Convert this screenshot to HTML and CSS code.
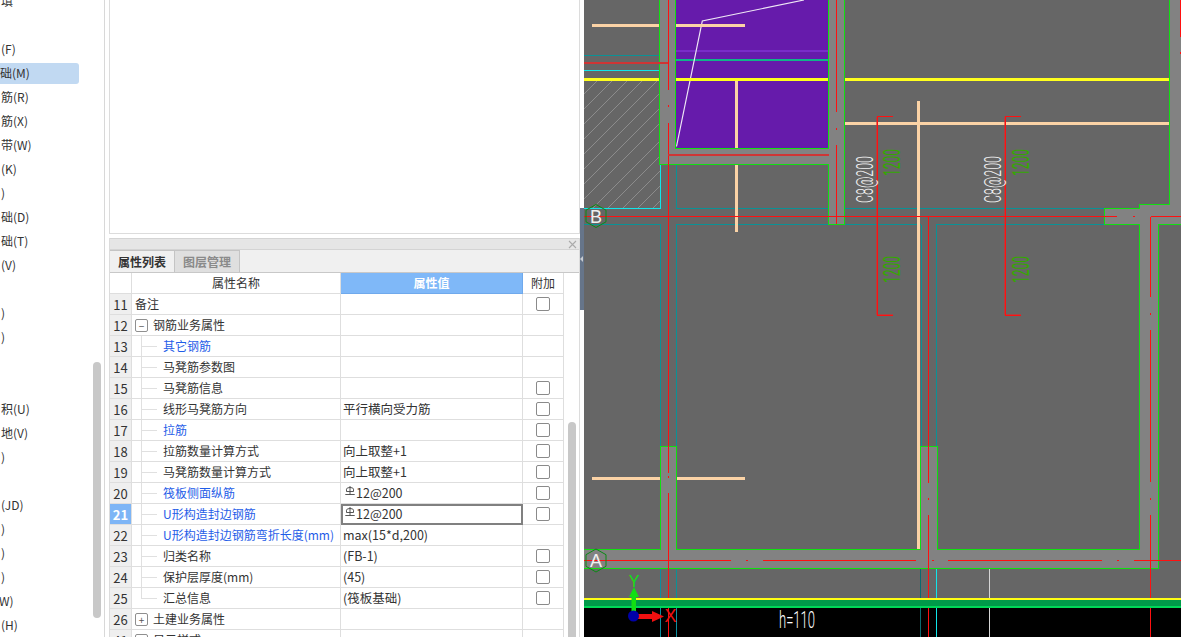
FILE: index.html
```html
<!DOCTYPE html>
<html lang="zh">
<head>
<meta charset="utf-8">
<title>属性列表</title>
<link rel="stylesheet" href="styles.css">
</head>
<body>
<div class="app">
  <aside class="nav">
    <ul class="nav-list">
      <li class="nav-item"><span>填</span></li>
      <li class="nav-item"></li>
      <li class="nav-item"><span>(F)</span></li>
      <li class="nav-item is-active"><span>础(M)</span></li>
      <li class="nav-item"><span>筋(R)</span></li>
      <li class="nav-item"><span>筋(X)</span></li>
      <li class="nav-item"><span>带(W)</span></li>
      <li class="nav-item"><span>(K)</span></li>
      <li class="nav-item"><span>)</span></li>
      <li class="nav-item"><span>础(D)</span></li>
      <li class="nav-item"><span>础(T)</span></li>
      <li class="nav-item"><span>(V)</span></li>
      <li class="nav-item"></li>
      <li class="nav-item"><span>)</span></li>
      <li class="nav-item"><span>)</span></li>
      <li class="nav-item"></li>
      <li class="nav-item"></li>
      <li class="nav-item"><span>积(U)</span></li>
      <li class="nav-item"><span>地(V)</span></li>
      <li class="nav-item"><span>)</span></li>
      <li class="nav-item"></li>
      <li class="nav-item"><span>(JD)</span></li>
      <li class="nav-item"><span>)</span></li>
      <li class="nav-item"><span>)</span></li>
      <li class="nav-item"><span>)</span></li>
      <li class="nav-item"><span class="nav-cut">W)</span></li>
      <li class="nav-item"><span>(H)</span></li>
    </ul>
    <div class="nav-thumb"></div>
  </aside>

  <main class="middle">
    <div class="preview"></div>
    <section class="props">
      <header class="props-title"><svg class="close" width="9" height="9" viewBox="0 0 9 9"><path d="M1 1l7 7M8 1L1 8"/></svg></header>
      <nav class="tabs">
        <span class="tab is-current">属性列表</span>
        <span class="tab">图层管理</span>
      </nav>
      <div class="grid-wrap">
        <table class="grid">
          <colgroup><col class="c-idx"><col class="c-name"><col class="c-val"><col class="c-add"></colgroup>
          <thead>
            <tr><th></th><th>属性名称</th><th class="head-val">属性值</th><th>附加</th></tr>
          </thead>
          <tbody>
            <tr><td class="idx">11</td><td class="name">备注</td><td></td><td class="add"><i class="check"></i></td></tr>
            <tr><td class="idx">12</td><td class="name group"><i class="toggle">−</i>钢筋业务属性</td><td></td><td></td></tr>
            <tr><td class="idx">13</td><td class="name child link"><span class="tree"></span>其它钢筋</td><td></td><td></td></tr>
            <tr><td class="idx">14</td><td class="name child"><span class="tree"></span>马凳筋参数图</td><td></td><td></td></tr>
            <tr><td class="idx">15</td><td class="name child"><span class="tree"></span>马凳筋信息</td><td></td><td class="add"><i class="check"></i></td></tr>
            <tr><td class="idx">16</td><td class="name child"><span class="tree"></span>线形马凳筋方向</td><td class="val">平行横向受力筋</td><td class="add"><i class="check"></i></td></tr>
            <tr><td class="idx">17</td><td class="name child link"><span class="tree"></span>拉筋</td><td></td><td class="add"><i class="check"></i></td></tr>
            <tr><td class="idx">18</td><td class="name child"><span class="tree"></span>拉筋数量计算方式</td><td class="val">向上取整+1</td><td class="add"><i class="check"></i></td></tr>
            <tr><td class="idx">19</td><td class="name child"><span class="tree"></span>马凳筋数量计算方式</td><td class="val">向上取整+1</td><td class="add"><i class="check"></i></td></tr>
            <tr><td class="idx">20</td><td class="name child link"><span class="tree"></span>筏板侧面纵筋</td><td class="val"><svg class="rebar" width="10" height="11" viewBox="0 0 10 11"><path d="M1.5 5.5V3.2Q1.5 1.5 5 1.5T8.5 3.2V5.5ZM5 0V8.5M.3 8.5H9.7"/></svg>12@200</td><td class="add"><i class="check"></i></td></tr>
            <tr><td class="idx idx-on">21</td><td class="name child link"><span class="tree"></span>U形构造封边钢筋</td><td class="val val-on"><svg class="rebar" width="10" height="11" viewBox="0 0 10 11"><path d="M1.5 5.5V3.2Q1.5 1.5 5 1.5T8.5 3.2V5.5ZM5 0V8.5M.3 8.5H9.7"/></svg>12@200</td><td class="add"><i class="check"></i></td></tr>
            <tr><td class="idx">22</td><td class="name child link"><span class="tree"></span>U形构造封边钢筋弯折长度(mm)</td><td class="val">max(15*d,200)</td><td></td></tr>
            <tr><td class="idx">23</td><td class="name child"><span class="tree"></span>归类名称</td><td class="val">(FB-1)</td><td class="add"><i class="check"></i></td></tr>
            <tr><td class="idx">24</td><td class="name child"><span class="tree"></span>保护层厚度(mm)</td><td class="val">(45)</td><td class="add"><i class="check"></i></td></tr>
            <tr><td class="idx">25</td><td class="name child"><span class="tree tree-end"></span>汇总信息</td><td class="val">(筏板基础)</td><td class="add"><i class="check"></i></td></tr>
            <tr><td class="idx">26</td><td class="name group"><i class="toggle">+</i>土建业务属性</td><td></td><td></td></tr>
            <tr><td class="idx">41</td><td class="name group"><i class="toggle">+</i>显示样式</td><td></td><td></td></tr>
          </tbody>
        </table>
        <div class="grid-scroll"><div class="grid-thumb"></div></div>
      </div>
    </section>
  </main>

  <div class="splitter"><div class="splitter-grip"></div></div>

  <svg class="cad" width="597" height="637" viewBox="584 0 597 637" shape-rendering="crispEdges">
    <rect class="bg" x="584" y="0" width="597" height="637"/>
    <g class="hatch" shape-rendering="auto">
      <path d="M584 94L599 79M584 109L614 79M584 124L629 79M584 139L644 79M584 154L659 79M584 169L659 94M584 184L659 109M584 199L659 124M593 208L659 142M608 208L659 157M623 208L660 171M638 208L660 186M653 208L660 201"/>
    </g>
    <g class="wall">
      <rect x="660" y="0" width="16" height="164"/>
      <rect x="676" y="148" width="153" height="16"/>
      <rect x="829" y="0" width="16" height="224"/>
      <rect x="1104" y="208" width="36" height="16"/>
      <rect x="1139" y="204" width="42" height="20"/>
      <rect x="1170" y="0" width="11" height="204"/>
      <rect x="1139" y="224" width="19" height="344"/>
      <rect x="660" y="446" width="16" height="103"/>
      <rect x="920" y="446" width="17" height="103"/>
      <rect x="584" y="549" width="575" height="19"/>
    </g>
    <rect class="room" x="676" y="0" width="153" height="148"/>
    <path class="l-purple" d="M676 51H829"/>
    <path class="l-mint" d="M676 60H829"/>
    <path class="l-white" shape-rendering="auto" d="M676.5 146.5L702.3 21L804 0"/>
    <path class="l-teal" d="M584 55.5H659M676.5 164V208.5H828M845 208.5H1104M584 224.5H660.5V446M676.5 446V224.5H828M845 224.5H921M921 224.5V446M936.5 446V224.5H1104M676.5 568V637"/>
    <path class="l-cyan" d="M584 70.5H659M660.5 164V208.5H584M936.5 568V637"/>
    <path class="l-teal-dim" d="M660.5 568V637"/>
    <path class="l-teal-dark" d="M920.5 568V637"/>
    <path class="l-pale" d="M989.5 568V637"/>
    <path class="l-yellow" d="M584 79.5H659M676 79.5H828M845 79.5H1169"/>
    <path class="l-peach" d="M592 25.5H659M676 25.5H745M736.5 81V148M736.5 164V232M845 123.5H1169M918.5 101V549M592 478.5H660M676 478.5H745"/>
    <path class="l-green" d="M659.5 0V164.5H676M675.5 0V148.5H828.5M828.5 0V148.5M828.5 164.5H676M828.5 164.5V224.5H844.5V0M1104.5 224.5V208.5H1139.5V204.5H1169.5V0M1104.5 224.5H1139.5V549.5H937V446.5H920.5V549.5H676V446.5H660.5V549.5H584M584 568.5H1158.5V224.5H1181"/>
    <path class="l-red-soft" d="M876.5 117V315M1004.5 117V315M877 314.5H893M1005 314.5H1021"/>
    <path class="l-red" d="M668.5 0V90M668.5 105V107M668.5 123V473M668.5 476V478M668.5 493V637M836.5 0V112M836.5 128V130M836.5 145V224M584 216.5H1117M1133 216.5H1135M1150.5 216.5H1181M928.5 216.5V483M928.5 498V500M928.5 515V637M1150.5 216.5V297M1150.5 313V315M1150.5 330V482M1150.5 498V500M1150.5 515V637M584 560.5H731M746 560.5H748M763 560.5H916M932 560.5H934M948 560.5H1102M1117 560.5H1119M1134 560.5H1181M877.5 315.5V116.5H893M877.5 315.5H893M1005.5 315.5V116.5H1021M1005.5 315.5H1021M1180.5 0V37M1180.5 52V54"/>
    <path class="l-red-dim" d="M584 62.5H668M668 154.5H829"/>
    <rect class="strip-black" x="584" y="608" width="597" height="29"/>
    <rect class="strip-yellow" x="584" y="598" width="597" height="2"/>
    <rect class="strip-green" x="584" y="600" width="597" height="6"/>
    <rect class="strip-lime" x="584" y="606" width="597" height="2"/>
    <path class="l-cyan" d="M936.5 608V637"/>
    <path class="l-teal-dim" d="M660.5 608V637M676.5 608V637"/>
    <path class="l-teal-dark" d="M920.5 608V637"/>
    <path class="l-pale" d="M989.5 608V637"/>
    <path class="l-red" d="M668.5 608V637M928.5 608V637M1150.5 608V637"/>
    <g shape-rendering="auto">
      <polygon class="hex" points="596,204.5 606,210.2 606,221.8 596,227.5 586,221.8 586,210.2"/>
      <text class="axis-tag" x="596" y="223">B</text>
      <polygon class="hex" points="596,549 606,554.7 606,566.3 596,572 586,566.3 586,554.7"/>
      <text class="axis-tag" x="596" y="567">A</text>

      <text class="dim" transform="translate(873 203) rotate(-90)" textLength="47" lengthAdjust="spacingAndGlyphs">C8@200</text>
      <text class="dim" transform="translate(1001 203) rotate(-90)" textLength="47" lengthAdjust="spacingAndGlyphs">C8@200</text>
      <text class="size" transform="translate(900 176) rotate(-90)" textLength="27" lengthAdjust="spacingAndGlyphs">1200</text>
      <text class="size" transform="translate(1028.5 176) rotate(-90)" textLength="27" lengthAdjust="spacingAndGlyphs">1200</text>
      <text class="size" transform="translate(900 283) rotate(-90)" textLength="27" lengthAdjust="spacingAndGlyphs">1200</text>
      <text class="size" transform="translate(1028.5 283) rotate(-90)" textLength="27" lengthAdjust="spacingAndGlyphs">1200</text>
      <text class="height" x="779" y="628" textLength="36" lengthAdjust="spacingAndGlyphs">h=110</text>

      <path class="arrow-y" d="M631.5 612V597H629L634 587L639 597H636V612Z"/>
      <path class="arrow-x" d="M638 614H652V611L664 616.5L652 622V619H638Z"/>
      <circle class="arrow-o" cx="633.5" cy="616" r="5.5"/>
      <text class="tag-y" x="634" y="587">Y</text>
      <text class="tag-x" x="670.5" y="622">X</text>
    </g>
  </svg>
</div>
</body>
</html>
```
FILE: styles.css
```css
* { box-sizing: border-box; }
html, body { margin: 0; height: 100%; overflow: hidden; background: #fff; }
body { font: 12px/1 "Noto Sans CJK SC", "Noto Sans", sans-serif; color: #333; }

.app { display: flex; width: 1181px; height: 637px; overflow: hidden; }

/* left navigation */
.nav { position: relative; flex: 0 0 109px; min-width: 0; height: 637px; overflow: hidden; }
.nav::after { content: ""; position: absolute; left: 104px; top: 0; bottom: 0; width: 1px; background: #d8d8d8; }
.nav-list { list-style: none; margin: -11px 0 0; padding: 0; width: 79px; }
.nav-item { height: 24px; display: flex; align-items: center; white-space: nowrap; }
.nav-item span { display: block; height: 21px; padding-left: 1px; line-height: 20px; }
.nav-cut { margin-left: -2px; }
.nav-item.is-active span { width: 79px; background: #c1d9f2; border-radius: 0 3px 3px 0; padding-left: 0; }
.nav-thumb { position: absolute; left: 93px; top: 362px; width: 8px; height: 256px; border-radius: 4px; background: #c8c8c8; }

/* middle */
.middle { flex: 0 0 471px; min-width: 0; display: flex; flex-direction: column; height: 637px; }
.preview { height: 234px; border: 1px solid #dcdcdc; border-top: 0; flex: none; margin-bottom: 4px; }
.props { flex: 1; display: flex; flex-direction: column; min-height: 0; border-right: 1px solid #dcdcdc; border-left: 1px solid #dcdcdc; }
.props-title { height: 12px; flex: none; background: #e6e6e6; border-top: 1px solid #d4d4d4; border-bottom: 1px solid #d4d4d4; display: flex; justify-content: flex-end; align-items: center; padding-right: 2px; }
.close path { stroke: #aaa; fill: none; stroke-width: 1.1; }
.tabs { display: flex; height: 23px; flex: none; background: #f0f0f0; border-bottom: 1px solid #c8c8c8; }
.tab { width: 65px; display: flex; align-items: center; justify-content: center; background: #dfdfdf; color: #8a8a8a; border-right: 1px solid #c4c4c4; border-top: 1px solid #c4c4c4; font-weight: 700; }
.tab.is-current { background: #f0f0f0; color: #333; }

.grid-wrap { flex: 1; display: flex; min-height: 0; overflow: hidden; }
.grid { flex: none; border-collapse: separate; border-spacing: 0; table-layout: fixed; width: 454px; height: 0; }
.c-idx { width: 22px; } .c-name { width: 209px; } .c-val { width: 182px; } .c-add { width: 41px; }
.grid th, .grid td { height: 21px; padding: 0; border-right: 1px solid #dedede; border-bottom: 1px solid #dedede; font-weight: 400; white-space: nowrap; overflow: hidden; }
.grid th { text-align: center; }
.grid .head-val { background: #7fb8f8; color: #fff; border-color: #6fa9ec; font-weight: 700; }
.idx { background: #efefef; text-align: center; font-size: 13px; }
.grid .idx-on { background: #7db5f6; color: #fff; font-weight: 700; }
.grid .name { position: relative; padding-left: 3px; }
.grid .group { padding-left: 21px; }
.grid .child { padding-left: 31px; }
.link { color: #1f5de8; }
.grid .val { padding-left: 2px; font-size: 12.5px; }
.val-on { outline: 2px solid #808080; outline-offset: -2px; }
.add { text-align: center; }
.check { display: block; width: 14px; height: 14px; margin: 0 auto; border: 1px solid #8a8a8a; border-radius: 2px; background: #fff; }
.toggle { position: absolute; left: 3px; top: 4px; display: flex; align-items: center; justify-content: center; width: 13px; height: 13px; border: 1px solid #8f8f8f; border-radius: 2px; font-style: normal; font-size: 10px; line-height: 1; color: #555; }
.tree { position: absolute; left: 9px; top: 0; width: 1px; height: 21px; background: #e0e0e0; }
.tree::after { content: ""; position: absolute; left: 1px; top: 10px; width: 15px; height: 1px; background: #e0e0e0; }
.tree-end { height: 11px; }
.rebar { vertical-align: 1px; margin: 0 1px 0 2px; }
.rebar path { fill: none; stroke: #444; stroke-width: .9; }

.grid-scroll { flex: none; width: 15px; position: relative; }
.grid-thumb { position: absolute; left: 4px; top: 149px; width: 8px; height: 300px; border-radius: 4px 4px 0 0; background: #c8c8c8; }

/* splitter */
.splitter { position: relative; flex: 0 0 4px; height: 637px; background: #fff; overflow: hidden; }
.splitter-grip { position: relative; top: 208px; height: 102px; background: #66758a; }
.splitter-grip::after { content: ""; position: absolute; left: 0; top: 48px; border: 3px solid transparent; border-left-width: 0; border-right: 3px solid #c8ccd2; }

/* CAD canvas */
.cad { flex: none; display: block; }
.bg { fill: #666; }
.wall rect { fill: #828282; }
.room { fill: #661bab; }
.hatch path { stroke: #8c8c8c; stroke-width: 1; }
.cad path { fill: none; }
.l-purple { stroke: #7a2cc8; stroke-width: 2; }
.l-mint { stroke: #10b48a; stroke-width: 2; }
.l-white { stroke: #efe8f5; stroke-width: 1.2; }
.l-teal { stroke: #0a9296; stroke-width: 1; }
.l-cyan { stroke: #10e6ea; stroke-width: 1; }
.l-teal-dim { stroke: #0b8fa0; stroke-width: 1; }
.l-teal-dark { stroke: #0a6a70; stroke-width: 1; }
.l-pale { stroke: #d6d6d6; stroke-width: 1; }
.l-yellow { stroke: #ffff1e; stroke-width: 3; }
.l-peach { stroke: #fbd3a6; stroke-width: 3; }
.l-green { stroke: #10e010; stroke-width: 1; }
.l-red { stroke: #ff1010; stroke-width: 1; }
.l-red-soft { stroke: #e02828; stroke-width: 1; opacity: .6; }
.l-red-dim { stroke: #cf3535; stroke-width: 2; }
.strip-black { fill: #000; }
.strip-yellow { fill: #ffff14; }
.strip-green { fill: #009a4a; }
.strip-lime { fill: #00d858; }
.hex { fill: none; stroke: #0a8a14; stroke-width: 1; }
.axis-tag { fill: #f0f0f0; font: 18px "Liberation Sans", sans-serif; text-anchor: middle; }
.dim { fill: #f0f0f0; font: 300 24px Roboto, "Liberation Sans", sans-serif; }
.size { fill: #34a800; font: 400 24px Roboto, "Liberation Sans", sans-serif; }
.height { fill: #fff; font: 300 24px Roboto, "Liberation Sans", sans-serif; }
.cad .arrow-y { fill: #12e012; }
.cad .arrow-x { fill: #f01010; }
.arrow-o { fill: #0000a8; }
.tag-y { fill: #12e012; font: 16px "Liberation Sans", sans-serif; text-anchor: middle; }
.tag-x { fill: #f01010; font: 18px "Liberation Sans", sans-serif; text-anchor: middle; }
```
